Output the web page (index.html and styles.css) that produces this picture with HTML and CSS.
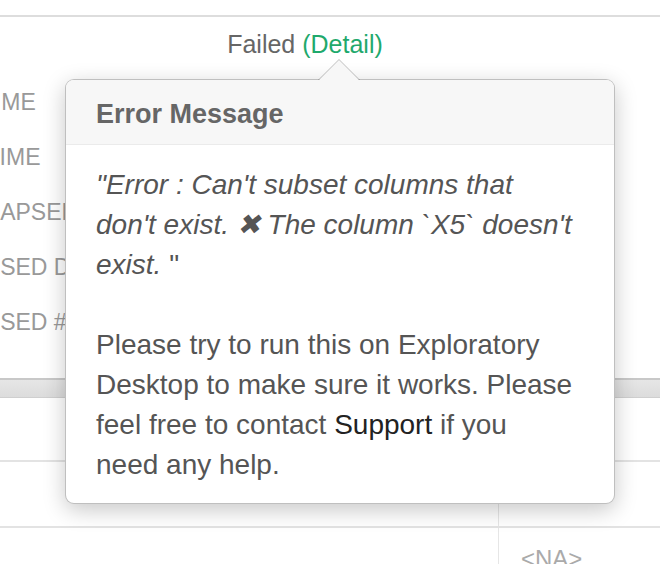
FILE: index.html
```html
<!DOCTYPE html>
<html lang="en">
<head>
    <meta charset="UTF-8">
    <meta name="viewport" content="width=device-width, initial-scale=1.0">
    <title>Job Detail - Error</title>
    <link rel="stylesheet" href="styles.css">
</head>
<body>

    <div class="page">
        <div class="top-bar"></div>

        <div class="status-row">
            <span class="status-text">Failed</span>
            <a class="detail-link" href="#">(Detail)</a>
        </div>

        <div class="info">
            <div class="info-row"><span class="info-label label-start">START TIME</span></div>
            <div class="info-row"><span class="info-label label-end">END TIME</span></div>
            <div class="info-row"><span class="info-label label-elapsed">ELAPSED TIME</span></div>
            <div class="info-row"><span class="info-label label-processed">PROCESSED DATA</span></div>
            <div class="info-row"><span class="info-label label-processed">PROCESSED # ROWS</span></div>
        </div>

        <div class="table-band"></div>

        <div class="table">
            <div class="table-row">
                <div class="cell cell-main"></div>
                <div class="cell cell-side"></div>
            </div>
            <div class="table-row">
                <div class="cell cell-main"></div>
                <div class="cell cell-side na">&lt;NA&gt;</div>
            </div>
            <div class="table-row">
                <div class="cell cell-main"></div>
                <div class="cell cell-side na">&lt;NA&gt;</div>
            </div>
        </div>

        <!-- Popover shown over the page -->
        <div class="popover">
            <div class="arrow"></div>
            <div class="popover-title">Error Message</div>
            <div class="popover-content">
                <p class="error-text"><i>"Error : Can't subset columns that don't exist. ✖ The column `X5` doesn't exist. </i>"</p>
                <p>Please try to run this on Exploratory Desktop to make sure it works. Please feel free to contact <a href="#" class="support-link">Support</a> if you need any help.</p>
            </div>
        </div>
    </div>

</body>
</html>
```

FILE: styles.css
```css
/* Global Styles */
body {
    font-family: "Liberation Sans", Arial, sans-serif;
    margin: 0;
    padding: 0;
    background-color: #fff;
    overflow: hidden;
}

.page {
    position: relative;
    width: 660px;
    height: 564px;
    overflow: hidden;
}

/* Top divider */
.top-bar {
    height: 15px;
    border-bottom: 2px solid #ddd;
}

/* Status */
.status-row {
    width: 610px;
    text-align: center;
    padding-top: 12px;
    height: 50px;
    font-size: 25px;
    line-height: 30px;
}

.status-text {
    color: #666;
}

.detail-link {
    color: #1fa96c;
    text-decoration: none;
}

/* Info labels (partly hidden under the popover) */
.info {
    height: 291px;
    overflow: hidden;
    padding-top: 8px;
}

.info-row {
    height: 55px;
    line-height: 30px;
    white-space: nowrap;
    overflow: hidden;
    width: 66px;
}

.info-label {
    display: inline-block;
    font-size: 23px;
    color: #999;
}

.label-start { margin-left: -98px; }
.label-end { margin-left: -69px; }
.label-elapsed { margin-left: -28px; }
.label-processed { margin-left: -97px; }

/* Grey header band of the table */
.table-band {
    height: 17px;
    border-top: 2px solid #c8c8c8;
    border-bottom: 1px solid #cfcfcf;
    background: linear-gradient(#e6e6e6, #dcdcdc);
}

/* Table rows */
.table-row {
    display: flex;
    height: 64px;
    border-bottom: 2px solid #e3e3e3;
}

.table-row:first-child {
    height: 62px;
}

.cell-main {
    width: 498px;
    border-right: 1px solid #e6e6e6;
}

.cell-side {
    flex-grow: 1;
}

.na {
    color: #aaa;
    font-size: 24px;
    line-height: 30px;
    padding-left: 22px;
    padding-top: 16px;
}

/* Popover */
.popover {
    position: absolute;
    top: 79px;
    left: 65px;
    width: 548px;
    background-color: #fff;
    border: 1px solid rgba(0, 0, 0, 0.25);
    border-radius: 9px;
    box-shadow: 0 6px 22px rgba(0, 0, 0, 0.22);
}

.arrow,
.arrow::after {
    position: absolute;
    width: 0;
    height: 0;
    border-style: solid;
    border-color: transparent;
}

.arrow {
    top: -21px;
    left: 252px;
    border-width: 0 21px 21px;
    border-bottom-color: rgba(0, 0, 0, 0.25);
}

.arrow::after {
    content: "";
    top: 1px;
    left: -20px;
    border-width: 0 20px 20px;
    border-bottom-color: #f7f7f7;
}

.popover-title {
    background-color: #f7f7f7;
    border-bottom: 1px solid #ebebeb;
    border-radius: 8px 8px 0 0;
    height: 64px;
    line-height: 68px;
    padding-left: 30px;
    font-size: 27px;
    font-weight: bold;
    color: #666;
}

.popover-content {
    padding: 20px 40px 18px 30px;
    font-size: 28px;
    line-height: 40px;
    color: #555;
}

.popover-content p {
    margin: 0;
}

.error-text {
    margin-bottom: 40px !important;
}

.support-link {
    color: #222;
    text-decoration: none;
}
```
